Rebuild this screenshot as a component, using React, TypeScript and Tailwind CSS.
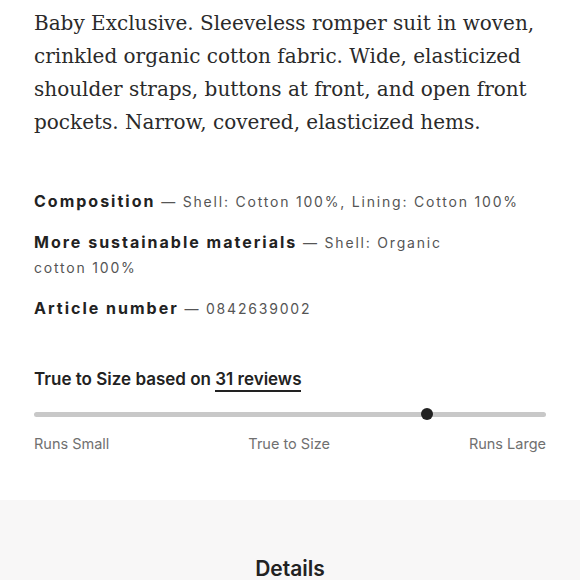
export default function App() {
  const sans = { fontFamily: "Inter, 'Noto Sans', sans-serif" };
  return (
    <div className="w-[580px] h-[580px] overflow-hidden bg-white" style={sans}>
      <div className="px-[34px] pt-[7px]">
        <p className="text-[20px] leading-[33px] text-[#2a2a2a]" style={{ fontFamily: "'DejaVu Serif', serif" }}>
          Baby Exclusive. Sleeveless romper suit in woven, crinkled organic cotton fabric. Wide, elasticized shoulder straps, buttons at front, and open front pockets. Narrow, covered, elasticized hems.
        </p>
        <div className="mt-[50px] flex flex-col gap-[16px] text-[#222]">
          <p className="leading-[24px]">
            <span className="text-[16px] font-bold tracking-[2px]">Composition</span>
            <span className="text-[14px] text-[#555] tracking-[1.8px]"> — Shell: Cotton 100%, Lining: Cotton 100%</span>
          </p>
          <p className="leading-[24px] pr-[90px]">
            <span className="text-[16px] font-bold tracking-[2px]">More sustainable materials</span>
            <span className="text-[14px] text-[#555] tracking-[1.8px]"> — Shell: Organic cotton 100%</span>
          </p>
          <p className="leading-[24px]">
            <span className="text-[16px] font-bold tracking-[2px]">Article number</span>
            <span className="text-[14px] text-[#555] tracking-[1.8px]"> — 0842639002</span>
          </p>
        </div>
        <p className="mt-[46px] text-[17px] font-semibold text-[#222] leading-[24px]">
          True to Size based on{" "}
          <span className="border-b-2 border-[#222] pb-[1px]">31 reviews</span>
        </p>
        <div className="mt-[17px] relative h-[12px] flex items-center">
          <div className="h-[5px] w-full rounded-full bg-[#c8c8c8]" />
          <div className="absolute left-[387px] w-[12px] h-[12px] rounded-full bg-[#222]" />
        </div>
        <div className="mt-[14px] flex justify-between text-[14.5px] text-[#707070] leading-[20px]">
          <span>Runs Small</span>
          <span>True to Size</span>
          <span>Runs Large</span>
        </div>
      </div>
      <div className="mt-[46px] bg-[#f8f7f7] h-[200px] pt-[55px] text-center">
        <h2 className="text-[21px] font-semibold text-[#222] leading-[28px]">Details</h2>
      </div>
    </div>
  );
}
